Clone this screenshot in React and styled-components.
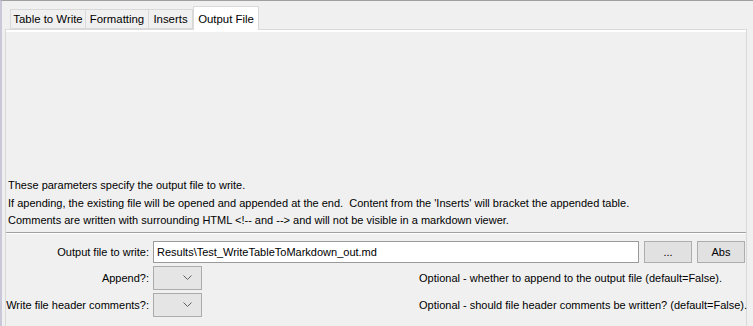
import React from "react";
import styled, { createGlobalStyle } from "styled-components";

const Global = createGlobalStyle`
  html, body { margin: 0; padding: 0; background: #f0f0f0; }
  body { font-family: "Liberation Sans", Arial, sans-serif; font-size: 11px; color: #000; }
  * { box-sizing: border-box; }
`;

const Frame = styled.div`
  width: 753px;
  height: 326px;
  overflow: hidden;
  border-top: 1px solid #a0a0a0;
  border-left: 2px solid #c8c8d8;
  background: #f0f0f0;
  display: flex;
  flex-direction: column;
  padding: 4px 6px 0 3px;
`;

const TabRow = styled.div`
  display: flex;
  align-items: flex-end;
  height: 24px;
  padding-left: 5px;
  position: relative;
  z-index: 1;
`;

const Tab = styled.div`
  width: ${p => p.$w}px;
  height: ${p => (p.$active ? "24px" : "20px")};
  margin: ${p => (p.$active ? "0 0 -1px 0" : "0")};
  background: ${p => (p.$active ? "#ffffff" : "#f0f0f0")};
  border: 1px solid #d9d9d9;
  border-bottom: ${p => (p.$active ? "none" : "1px solid #d9d9d9")};
  border-left: ${p => (p.$first || p.$active ? "1px solid #d9d9d9" : "none")};
  display: flex;
  align-items: center;
  justify-content: center;
  font-size: 11.4px;
  white-space: nowrap;
`;

const Panel = styled.div`
  flex: 1;
  border: 1px solid #d9d9d9;
  border-bottom: none;
  box-shadow: inset 0 2px 0 #ffffff;
  display: flex;
  flex-direction: column;
`;

const Spacer = styled.div`
  height: 147px;
`;

const Notes = styled.div`
  display: flex;
  flex-direction: column;
  padding-left: 2px;
`;

const Note = styled.div`
  height: 17.5px;
  line-height: 17.5px;
  white-space: nowrap;
`;

const Separator = styled.div`
  margin-top: 2px;
  height: 2px;
  border-top: 1px solid #a0a0a0;
  border-bottom: 1px solid #ffffff;
`;

const Grid = styled.div`
  display: grid;
  grid-template-columns: 143px 1fr;
  row-gap: 3px;
  column-gap: 4px;
  margin-top: 7px;
  align-items: center;
`;

const Label = styled.div`
  text-align: right;
  white-space: nowrap;
`;

const FieldRow = styled.div`
  display: flex;
  align-items: center;
  gap: 5px;
`;

const TextField = styled.div`
  width: 486px;
  height: 22px;
  background: #fff;
  border: 1px solid #9a9a9a;
  display: flex;
  align-items: center;
  padding-left: 3px;
`;

const Button = styled.div`
  width: 48px;
  height: 22px;
  background: #e1e1e1;
  border: 1px solid #adadad;
  display: flex;
  align-items: center;
  justify-content: center;
`;

const Select = styled.div`
  width: 49px;
  height: 24px;
  background: #e5e5e5;
  border: 1px solid #acacac;
  display: flex;
  align-items: center;
  justify-content: flex-end;
  padding-right: 9px;
`;

const Help = styled.div`
  margin-left: 212px;
  white-space: nowrap;
`;

const Chevron = () => (
  <svg width="9" height="5" viewBox="0 0 9 5">
    <path d="M0.5 0.5 L4.5 4.5 L8.5 0.5" fill="none" stroke="#606060" strokeWidth="1" />
  </svg>
);

export default function App() {
  return (
    <>
      <Global />
      <Frame>
        <TabRow>
          <Tab $first $w={76}>Table to Write</Tab>
          <Tab $w={63}>Formatting</Tab>
          <Tab $w={44}>Inserts</Tab>
          <Tab $active $w={66}>Output File</Tab>
        </TabRow>
        <Panel>
          <Spacer />
          <Notes>
            <Note>These parameters specify the output file to write.</Note>
            <Note>If apending, the existing file will be opened and appended at the end.&nbsp; Content from the 'Inserts' will bracket the appended table.</Note>
            <Note>Comments are written with surrounding HTML &lt;!-- and --&gt; and will not be visible in a markdown viewer.</Note>
          </Notes>
          <Separator />
          <Grid>
            <Label>Output file to write:</Label>
            <FieldRow>
              <TextField>Results\Test_WriteTableToMarkdown_out.md</TextField>
              <Button>...</Button>
              <Button>Abs</Button>
            </FieldRow>
            <Label>Append?:</Label>
            <FieldRow>
              <Select><Chevron /></Select>
              <Help>Optional - whether to append to the output file (default=False).</Help>
            </FieldRow>
            <Label>Write file header comments?:</Label>
            <FieldRow>
              <Select><Chevron /></Select>
              <Help>Optional - should file header comments be written? (default=False).</Help>
            </FieldRow>
          </Grid>
        </Panel>
      </Frame>
    </>
  );
}
